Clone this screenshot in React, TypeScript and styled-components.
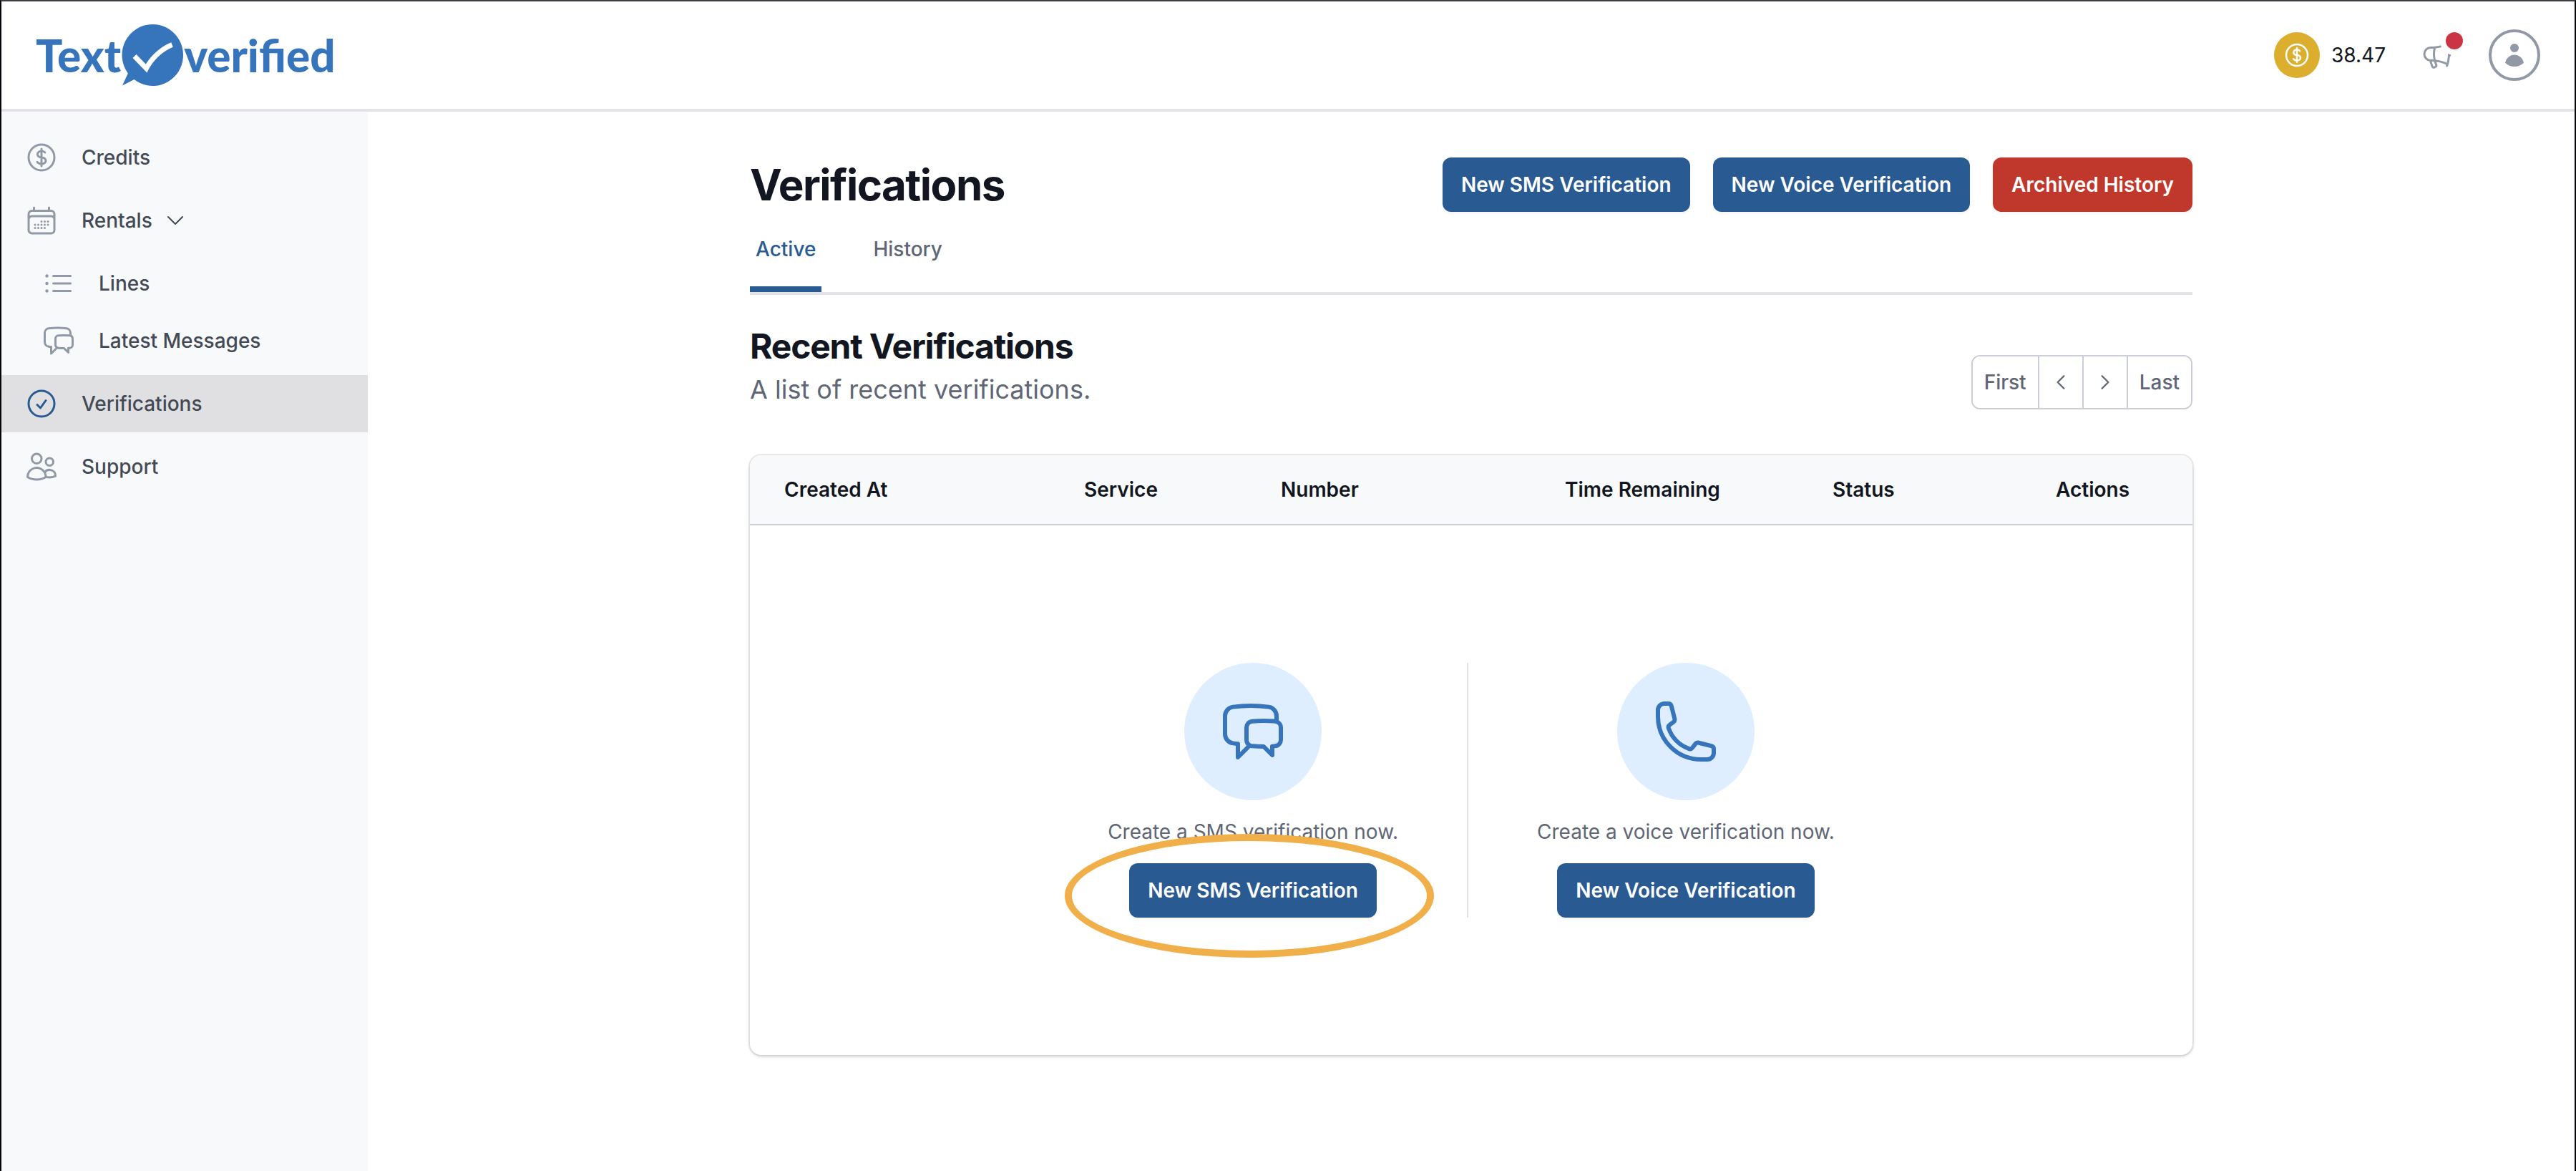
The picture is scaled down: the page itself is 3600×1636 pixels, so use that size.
import React from "react";
import styled, { createGlobalStyle, css } from "styled-components";
import {
  HiOutlineChatBubbleLeftRight,
  HiOutlineCheckCircle,
  HiOutlineChevronDown,
  HiOutlineChevronLeft,
  HiOutlineChevronRight,
  HiOutlineCurrencyDollar,
  HiOutlineListBullet,
  HiOutlineMegaphone,
  HiOutlinePhone,
  HiOutlineUsers,
} from "react-icons/hi2";

const color = {
  brand: "#3674bc",
  primary: "#295a92",
  danger: "#c0382b",
  ink: "#111620",
  text: "#434a56",
  muted: "#5f6675",
  icon: "#9299a6",
  line: "#e2e2e7",
  border: "#cbced6",
  surface: "#f8f9fb",
};

const GlobalStyle = createGlobalStyle`
  *, *::before, *::after { box-sizing: border-box; }
  body {
    margin: 0;
    background: #fff;
    color: ${color.ink};
    font-family: Inter, "Liberation Sans", sans-serif;
    font-size: 28px;
    line-height: 40px;
    -webkit-font-smoothing: antialiased;
  }
  h1, h2, p, ul { margin: 0; padding: 0; }
  ul { list-style: none; }
  button { font: inherit; cursor: pointer; }
  a { color: inherit; text-decoration: none; }
  svg { display: block; flex: none; }
`;

const Page = styled.div`
  display: flex;
  flex-direction: column;
  min-height: 100vh;
  border: 2px solid #05070d;
  border-top-color: #3b3e42;
  border-bottom: 0;
`;

const Header = styled.header`
  display: flex;
  align-items: center;
  justify-content: space-between;
  height: 154px;
  padding: 0 48px;
  border-bottom: 4px solid ${color.line};
`;

const LogoLink = styled.a`
  display: flex;
  align-items: center;
  color: ${color.brand};
  font-family: Lato, "Liberation Sans", sans-serif;
  font-size: 62px;
  font-weight: 900;
  line-height: 88px;
`;

const HeaderTools = styled.div`
  display: flex;
  align-items: center;
`;

const Balance = styled.a`
  display: flex;
  align-items: center;
  gap: 16px;
`;

const Coin = styled.span`
  display: grid;
  place-items: center;
  width: 64px;
  height: 64px;
  border-radius: 50%;
  background: #dbae2e;
  color: #fff;
`;

const NewsButton = styled.button`
  position: relative;
  margin: 0 48px;
  padding: 0;
  border: 0;
  background: none;
  color: ${color.icon};
`;

const Badge = styled.span`
  position: absolute;
  top: -8px;
  right: -12px;
  width: 24px;
  height: 24px;
  border-radius: 50%;
  background: #c93543;
  box-shadow: 0 0 0 8px #fff;
`;

const AvatarButton = styled.button`
  display: grid;
  place-items: center;
  width: 72px;
  height: 72px;
  padding: 0;
  border: 4px solid ${color.icon};
  border-radius: 50%;
  background: none;
  color: ${color.icon};
`;

const Body = styled.div`
  display: flex;
  flex: 1;
`;

const Sidebar = styled.nav`
  flex: none;
  width: 512px;
  padding: 24px 0;
  background: ${color.surface};
`;

const NavList = styled.ul`
  display: flex;
  flex-direction: column;
  gap: 8px;
`;

const SubList = styled.ul`
  margin-top: 8px;
`;

const navRow = css`
  display: flex;
  align-items: center;
  width: 100%;
  height: 80px;
  border: 0;
  background: none;
  color: ${color.text};
  font-weight: 500;
  text-align: left;
`;

const NavLink = styled.a<{ $active?: boolean; $nested?: boolean }>`
  ${navRow}
  gap: 32px;
  padding: 0 32px 0 ${(p) => (p.$nested ? 56 : 32)}px;
  background: ${(p) => (p.$active ? "#e0e0e2" : "transparent")};
  > svg { color: ${(p) => (p.$active ? color.primary : color.icon)}; }
`;

const NavToggle = styled.button`
  ${navRow}
  gap: 16px;
  padding: 0 32px;
`;

const ToggleLabel = styled.span`
  display: flex;
  align-items: center;
  gap: 32px;
  > svg { color: ${color.icon}; }
`;

const Main = styled.main`
  flex: 1;
  padding: 64px 32px;
`;

const Content = styled.div`
  max-width: 2016px;
  margin: 0 auto;
`;

const TitleRow = styled.div`
  display: flex;
  align-items: center;
  justify-content: space-between;
`;

const Title = styled.h1`
  font-size: 60px;
  line-height: 72px;
  font-weight: 700;
  letter-spacing: -0.025em;
`;

const Actions = styled.div`
  display: flex;
  gap: 32px;
`;

const Button = styled.button<{ $danger?: boolean }>`
  padding: 18px 26px;
  border: 0;
  border-radius: 12px;
  background: ${(p) => (p.$danger ? color.danger : color.primary)};
  color: #fff;
  font-weight: 600;
  white-space: nowrap;
  box-shadow: 0 2px 4px rgba(0, 0, 0, 0.05);
`;

const Tabs = styled.nav`
  display: flex;
  gap: 64px;
  margin-top: 32px;
  border-bottom: 4px solid ${color.line};
`;

const Tab = styled.a<{ $active?: boolean }>`
  padding: 0 8px 32px;
  border-bottom: 8px solid ${(p) => (p.$active ? color.primary : "transparent")};
  color: ${(p) => (p.$active ? color.primary : color.muted)};
  font-weight: 500;
`;

const SectionHead = styled.div`
  display: flex;
  align-items: flex-end;
  justify-content: space-between;
  margin-top: 40px;
`;

const SectionTitle = styled.h2`
  font-size: 48px;
  line-height: 64px;
  font-weight: 700;
  letter-spacing: -0.025em;
`;

const SectionNote = styled.p`
  color: ${color.muted};
  font-size: 36px;
  line-height: 56px;
`;

const Pager = styled.div`
  display: flex;
  border: 2px solid ${color.border};
  border-radius: 12px;
  overflow: hidden;
`;

const PagerButton = styled.button`
  display: flex;
  align-items: center;
  height: 72px;
  padding: 0 16px;
  border: 0;
  background: #fff;
  color: ${color.muted};
  font-weight: 500;
  & + & { border-left: 2px solid ${color.border}; }
`;

const Card = styled.section`
  margin-top: 64px;
  border-radius: 16px;
  overflow: hidden;
  box-shadow: 0 0 0 2px rgba(0, 0, 0, 0.07), 0 2px 6px rgba(0, 0, 0, 0.1), 0 2px 4px rgba(0, 0, 0, 0.06);
`;

const Table = styled.table`
  width: 100%;
  table-layout: fixed;
  border-collapse: separate;
  border-spacing: 0;
`;

const HeadCell = styled.th`
  padding: 28px 24px;
  border-bottom: 2px solid ${color.border};
  background: ${color.surface};
  font-weight: 600;
  text-align: left;
  &:first-child { padding-left: 48px; }
`;

const EmptyCell = styled.td`
  padding: 192px 48px;
`;

const Choices = styled.div`
  display: flex;
  justify-content: center;
`;

const Choice = styled.div`
  display: flex;
  flex-direction: column;
  align-items: center;
  gap: 24px;
  color: ${color.muted};
  &:first-child {
    padding-right: 96px;
    border-right: 2px solid ${color.line};
  }
  &:last-child { padding-left: 96px; }
`;

const Disc = styled.span`
  display: grid;
  place-items: center;
  width: 192px;
  height: 192px;
  border-radius: 50%;
  background: #dfeefe;
  color: ${color.brand};
`;

const Marked = styled.div`
  position: relative;
  display: flex;
`;

const Highlight = styled.span`
  position: absolute;
  inset: -41px -80px -56px -90px;
  border: 10px solid #f0af48;
  border-radius: 50%;
  pointer-events: none;
`;

const columns = [
  { label: "Created At", width: 443 },
  { label: "Service", width: 275 },
  { label: "Number", width: 397 },
  { label: "Time Remaining", width: 374 },
  { label: "Status", width: 312 },
  { label: "Actions", width: 215 },
];

function LogoMark() {
  return (
    <svg width="88" height="88" viewBox="0 0 88 88" aria-hidden="true">
      <path
        fill="currentColor"
        d="M44 1a42.500 43 0 1 1-25.500 77L2 86.500l7.800-17A42.500 43 0 0 1 44 1Z"
      />
      <path
        fill="none"
        stroke="#fff"
        strokeWidth="7"
        d="M19 45.500 35.500 62.500C42 50 55 36 71.500 29.500"
      />
    </svg>
  );
}

const calendarDots = [
  [12, 12.75], [14.25, 12.75], [16.5, 12.75],
  [7.5, 15], [9.75, 15], [12, 15], [14.25, 15], [16.5, 15],
  [7.5, 17.25], [9.75, 17.25], [12, 17.25], [14.25, 17.25],
];

function CalendarIcon() {
  return (
    <svg width="48" height="48" viewBox="0 0 24 24" aria-hidden="true">
      <path
        fill="none"
        stroke="currentColor"
        strokeWidth="1.5"
        strokeLinecap="round"
        strokeLinejoin="round"
        d="M6.75 3v2.25M17.25 3v2.25M3 18.75V7.5a2.25 2.25 0 0 1 2.25-2.25h13.5A2.25 2.25 0 0 1 21 7.5v11.25m-18 0A2.25 2.25 0 0 0 5.25 21h13.5A2.25 2.25 0 0 0 21 18.75m-18 0v-7.5A2.25 2.25 0 0 1 5.25 9h13.5A2.25 2.25 0 0 1 21 11.25v7.5"
      />
      {calendarDots.map(([x, y]) => (
        <circle key={`${x}-${y}`} cx={x} cy={y} r="0.75" fill="currentColor" />
      ))}
    </svg>
  );
}

export default function App() {
  return (
    <Page>
      <GlobalStyle />
      <Header>
        <LogoLink href="#">
          <span>Text</span>
          <LogoMark />
          <span>verified</span>
        </LogoLink>
        <HeaderTools>
          <Balance href="#credits">
            <Coin>
              <HiOutlineCurrencyDollar size={40} />
            </Coin>
            38.47
          </Balance>
          <NewsButton aria-label="Announcements">
            <HiOutlineMegaphone size={48} />
            <Badge />
          </NewsButton>
          <AvatarButton aria-label="Account">
            <svg width="36" height="36" viewBox="0 0 36 36" fill="currentColor" aria-hidden="true">
              <circle cx="18" cy="8" r="6" />
              <path d="M5 28.500a13.200 13.200 0 0 1 26 0C28 32 23 34 18 34S8 32 5 28.500Z" />
            </svg>
          </AvatarButton>
        </HeaderTools>
      </Header>

      <Body>
        <Sidebar aria-label="Main">
          <NavList>
            <li>
              <NavLink href="#credits">
                <HiOutlineCurrencyDollar size={48} />
                Credits
              </NavLink>
            </li>
            <li>
              <NavToggle aria-expanded="true">
                <ToggleLabel>
                  <CalendarIcon />
                  Rentals
                </ToggleLabel>
                <HiOutlineChevronDown size={32} />
              </NavToggle>
              <SubList>
                <li>
                  <NavLink href="#lines" $nested>
                    <HiOutlineListBullet size={48} />
                    Lines
                  </NavLink>
                </li>
                <li>
                  <NavLink href="#messages" $nested>
                    <HiOutlineChatBubbleLeftRight size={48} />
                    Latest Messages
                  </NavLink>
                </li>
              </SubList>
            </li>
            <li>
              <NavLink href="#verifications" $active aria-current="page">
                <HiOutlineCheckCircle size={48} />
                Verifications
              </NavLink>
            </li>
            <li>
              <NavLink href="#support">
                <HiOutlineUsers size={48} />
                Support
              </NavLink>
            </li>
          </NavList>
        </Sidebar>

        <Main>
          <Content>
            <TitleRow>
              <Title>Verifications</Title>
              <Actions>
                <Button>New SMS Verification</Button>
                <Button>New Voice Verification</Button>
                <Button $danger>Archived History</Button>
              </Actions>
            </TitleRow>

            <Tabs aria-label="Verification views">
              <Tab href="#active" $active>Active</Tab>
              <Tab href="#history">History</Tab>
            </Tabs>

            <SectionHead>
              <div>
                <SectionTitle>Recent Verifications</SectionTitle>
                <SectionNote>A list of recent verifications.</SectionNote>
              </div>
              <Pager>
                <PagerButton>First</PagerButton>
                <PagerButton aria-label="Previous page">
                  <HiOutlineChevronLeft size={28} strokeWidth={2} />
                </PagerButton>
                <PagerButton aria-label="Next page">
                  <HiOutlineChevronRight size={28} strokeWidth={2} />
                </PagerButton>
                <PagerButton>Last</PagerButton>
              </Pager>
            </SectionHead>

            <Card>
              <Table>
                <colgroup>
                  {columns.map((c) => (
                    <col key={c.label} style={{ width: c.width }} />
                  ))}
                </colgroup>
                <thead>
                  <tr>
                    {columns.map((c) => (
                      <HeadCell key={c.label} scope="col">{c.label}</HeadCell>
                    ))}
                  </tr>
                </thead>
                <tbody>
                  <tr>
                    <EmptyCell colSpan={columns.length}>
                      <Choices>
                        <Choice>
                          <Disc>
                            <HiOutlineChatBubbleLeftRight size={96} />
                          </Disc>
                          <p>Create a SMS verification now.</p>
                          <Marked>
                            <Button>New SMS Verification</Button>
                            <Highlight />
                          </Marked>
                        </Choice>
                        <Choice>
                          <Disc>
                            <HiOutlinePhone size={96} />
                          </Disc>
                          <p>Create a voice verification now.</p>
                          <Button>New Voice Verification</Button>
                        </Choice>
                      </Choices>
                    </EmptyCell>
                  </tr>
                </tbody>
              </Table>
            </Card>
          </Content>
        </Main>
      </Body>
    </Page>
  );
}
